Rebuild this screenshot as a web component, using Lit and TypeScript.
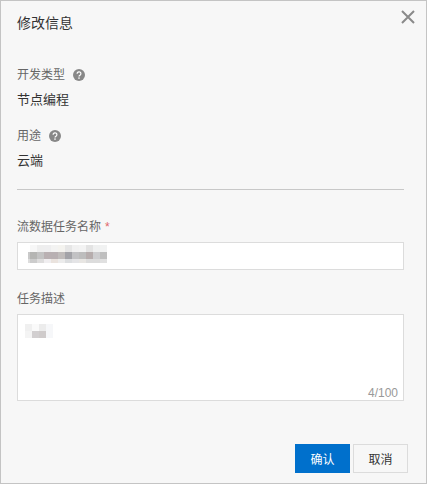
import { LitElement, html, css } from "lit";
import { customElement } from "lit/decorators.js";

const nameMosaic = [
  ["#ffffff","#f7f7f7","#eeeeee","#eeeeef","#f3f3f2","#f4f3ef","#e6e6e6","#f1f1f1","#f3f3f3","#e3e3e3","#eff0f0","#f1f2f2"],
  ["#c9c9c9","#b5b5b3","#c3c3c3","#b9b0b2","#b8b0b2","#c0bcbb","#a3a3a8","#c2c2c4","#bdbdbd","#b6adad","#cdcdcf","#bfbfbf"],
  ["#dddddd","#cccccc","#dedddd","#f0eef0","#eae3de","#ececec","#dcdee0","#e4e4e6","#e8e6e3","#dcdcdc","#dcdcdc","#e0e0e0"],
];
const descMosaic = [
  ["#f0f0f0","#fafafa","#ececec","#f6f7f9"],
  ["#f4f4f4","#d2cfd0","#cfcbcb","#f6f7f9"],
];

@customElement("app-root")
export class AppRoot extends LitElement {
  static styles = css`
    :host {
      display: block;
      width: 427px;
      height: 484px;
      font-family: "Liberation Sans", "Noto Sans CJK SC", sans-serif;
    }
    * { box-sizing: border-box; }
    .dialog {
      position: relative;
      width: 427px;
      height: 484px;
      background: #f7f7f7;
      border: 1px solid #c4c4c4;
      padding: 0 16px;
      display: flex;
      flex-direction: column;
      color: #333;
    }
    .title { margin-top: 12px; height: 20px; line-height: 20px; font-size: 14px; color: #333; }
    .close { position: absolute; top: 8px; right: 10px; width: 16px; height: 16px; }
    .label { display: flex; align-items: center; gap: 8px; height: 18px; line-height: 18px; font-size: 12px; color: #666; }
    .help { width: 12px; height: 12px; display: block; }
    .value { height: 18px; line-height: 18px; font-size: 13px; color: #333; margin-top: 7px; }
    .dev { margin-top: 33px; }
    .use { margin-top: 18px; }
    .divider { height: 1px; background: #c8c8c8; margin-top: 19px; width: 387px; }
    .req { color: #e0666a; margin-left: 4px; }
    .name-label { margin-top: 28px; }
    .input {
      margin-top: 6px;
      width: 387px;
      height: 28px;
      background: #fff;
      border: 1px solid #dcdcdc;
      padding: 2px 0 0 10px;
    }
    .desc-label { margin-top: 20px; }
    .textarea {
      position: relative;
      margin-top: 6px;
      width: 387px;
      height: 87px;
      background: #fff;
      border: 1px solid #dcdcdc;
      padding: 9px 0 0 7px;
    }
    .mosaic { display: grid; grid-auto-rows: 7px; }
    .name { grid-template-columns: 2px repeat(11, 7px); grid-template-rows: 7px 7px 4px; }
    .descm { grid-template-columns: repeat(4, 7px); }
    .count { position: absolute; right: 5px; bottom: 0; font-size: 12px; line-height: 13px; color: #999; }
    .footer { display: flex; justify-content: flex-end; gap: 3px; margin-top: 43px; width: 391px; }
    .btn {
      width: 55px;
      height: 29px;
      font: inherit;
      font-size: 12px;
      padding: 0;
      border-radius: 0;
    }
    .primary { background: #0070cc; color: #fff; border: 0; }
    .secondary { background: #f7f7f7; color: #333; border: 1px solid #dcdcdc; }
  `;

  private help() {
    return html`<svg class="help" viewBox="0 0 12 12" aria-hidden="true">
      <circle cx="6" cy="6" r="6" fill="#888"></circle>
      <path d="M4.1 4.7a1.9 1.8 0 1 1 2.9 1.5c-.7.4-1 .7-1 1.4" fill="none" stroke="#fff" stroke-width="1.2"></path>
      <rect x="5.3" y="8.4" width="1.4" height="1.4" fill="#fff"></rect>
    </svg>`;
  }

  private mosaic(rows: string[][], cls: string) {
    return html`<div class="mosaic ${cls}">
      ${rows.flat().map((c) => html`<span style="background:${c}"></span>`)}
    </div>`;
  }

  render() {
    return html`<div class="dialog">
      <div class="title">修改信息</div>
      <svg class="close" viewBox="0 0 16 16" aria-hidden="true">
        <path d="M2 2 14 14M14 2 2 14" stroke="#8a8a8a" stroke-width="2" fill="none"></path>
      </svg>
      <div class="label dev">开发类型 ${this.help()}</div>
      <div class="value">节点编程</div>
      <div class="label use">用途 ${this.help()}</div>
      <div class="value">云端</div>
      <div class="divider"></div>
      <div class="label name-label"><span>流数据任务名称<span class="req">*</span></span></div>
      <div class="input">${this.mosaic(nameMosaic, "name")}</div>
      <div class="label desc-label">任务描述</div>
      <div class="textarea">
        ${this.mosaic(descMosaic, "descm")}
        <span class="count">4/100</span>
      </div>
      <div class="footer">
        <button class="btn primary">确认</button>
        <button class="btn secondary">取消</button>
      </div>
    </div>`;
  }
}
